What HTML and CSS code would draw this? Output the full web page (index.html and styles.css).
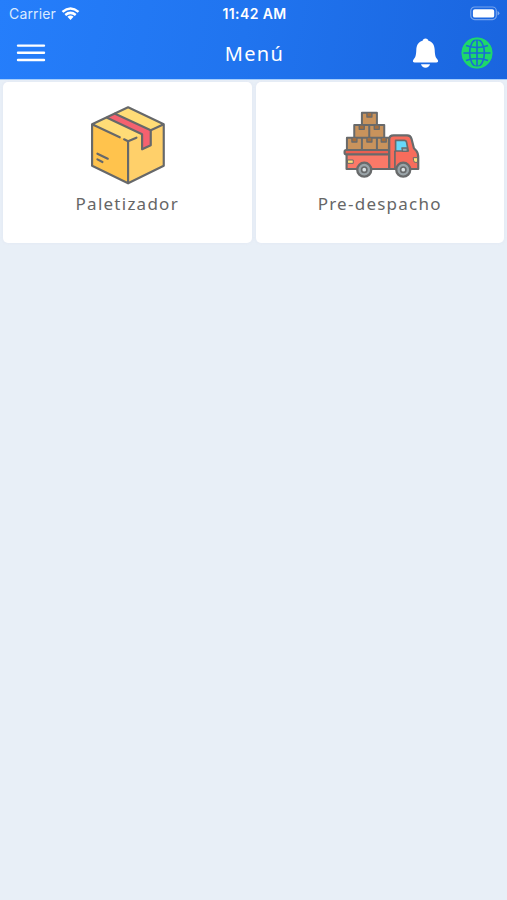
FILE: index.html
```html
<!DOCTYPE html>
<html lang="es">
<head>
<meta charset="utf-8">
<title>Menú</title>
<link rel="stylesheet" href="styles.css">
</head>
<body>
<header class="header">
  <div class="status">
    <div class="carrier"><span class="carrier-name">Carrier</span>
      <svg class="wifi" viewBox="0 0 20 15" fill="none" stroke="#fff" stroke-width="2.7"><path d="M1.4 5.2Q10-2 18.6 5.2M4.4 8.5Q10 4 15.6 8.5"/><path d="M6.7 10.4Q10 7.9 13.3 10.4L10 14Z" fill="#fff" stroke="none"/></svg>
    </div>
    <span class="time">11:42 AM</span>
    <svg class="battery" viewBox="0 0 31 15"><rect x=".8" y=".8" width="26.4" height="13" rx="4" fill="none" stroke="#fff" stroke-opacity=".4" stroke-width="1.2"/><rect x="3" y="3" width="22" height="8.7" rx="2" fill="#fff"/><path d="M28.5 5v4.6Q30.4 8.7 30.4 7.3T28.5 5Z" fill="#fff" fill-opacity=".45"/></svg>
  </div>
  <div class="toolbar">
    <svg class="burger" viewBox="0 0 29 20" stroke="#fff" stroke-width="2.4" stroke-linecap="round"><path d="M1.5 2.6h26M1.5 9.8h26M1.5 17h26"/></svg>
    <h1 class="title">Menú</h1>
    <div class="actions">
      <svg class="bell" viewBox="0 0 27 32" fill="#fff"><path d="M13.5.5C15.2.5 16.2 1.5 16.5 2.8 21 4.2 22.8 7.3 23 12.5 23.2 18.3 24 20.3 26 22.4 27.1 24 26.3 25.2 24.7 25.2H2.3C.7 25.2-.1 24 1 22.4 3 20.3 3.8 18.3 4 12.5 4.2 7.3 6 4.2 10.5 2.8 10.8 1.5 11.8.5 13.5.5Z"/><path d="M8.8 27.2h9.4Q17 30.8 13.5 30.8T8.8 27.2Z"/></svg>
      <svg class="globe" viewBox="0 0 32 32"><circle cx="16" cy="16" r="15.3" fill="#1ed76b"/><g fill="none" stroke="#1a69d8" stroke-width="1.6"><path d="M16 2v28M1 16h30M5 8.5Q16 12.5 27 8.5M5 23.5Q16 19.5 27 23.5"/><ellipse cx="16" cy="16" rx="7.4" ry="13.6"/></g><circle cx="16" cy="16" r="14.5" fill="none" stroke="#1ed76b" stroke-width="1.8"/></svg>
    </div>
  </div>
</header>
<main class="menu">
  <a class="card">
    <svg class="icon" viewBox="-8.25 0 300 288" stroke-linejoin="round" stroke-linecap="round">
      <path d="M37 85 145 34 252 85V209L145 262 37 209Z" fill="#ffd06a"/>
      <path d="M37 85 145 134V262L37 209Z" fill="#ffc34d"/>
      <path d="M37 85 145 34 252 85 145 134Z" fill="#ffdc77"/>
      <path d="M82 65 106 53 213 103V148L187 160V115Z" fill="#f5616f"/>
      <g fill="none" stroke="#66686a" stroke-width="6.5">
        <path d="M120 124 37 85 145 34 252 85V209L145 262 37 209V85M252 85 213 103M145 262V136L133 130M145 136 170 125"/>
        <path d="M82 65 187 115V160L213 148V103L106 53M53 173 84 188M53 190 68 198"/>
      </g>
    </svg>
    <span class="label">Paletizador</span>
  </a>
  <a class="card">
    <svg class="icon" viewBox="-15.75 -12 300 288" stroke-linejoin="round" stroke-linecap="round">
      <g fill="#c9935c" stroke="#686a6b" stroke-width="6">
        <path d="M80 38h45v37H80ZM57 75h45v38H57ZM102 75h45v38h-45ZM35 113h45v37H35ZM80 113h45v37H80ZM125 113h36v37h-36Z"/>
      </g>
      <g fill="#a66e3c" stroke="#686a6b" stroke-width="4">
        <path d="M95 40v11h15V40M72 77v11h15V77M117 77v11h15V77M50 115v11h15V115M95 115v11h15V115M138 115v11h15V115"/>
      </g>
      <g stroke="#686a6b" stroke-width="6.5">
        <path d="M34 162H162V207H34Z" fill="#fa7968"/>
        <rect x="28" y="150" width="134" height="13" rx="5" fill="#e95f51"/>
        <path d="M162 207V119Q162 106 175 106H216Q226 106 229 117L236 145 243 152Q249 159 249 174V207Z" fill="#f76c5c"/>
      </g>
      <path d="M179 154V206" stroke="#686a6b" stroke-width="5"/>
      <path d="M181 121H207Q213 121 214 127L219 153H181Z" fill="#67d7fa" stroke="#686a6b" stroke-width="5"/>
      <path d="M200 144h16v10h-14Z" fill="#9ba7ad" stroke="#686a6b" stroke-width="4"/>
      <path d="M38 180H54V190H38ZM235 173H247V187H240Q235 187 235 182Z" fill="#ffe17a" stroke="#686a6b" stroke-width="3"/>
      <g fill="#9aa4a8" stroke="#686a6b" stroke-width="7"><circle cx="87" cy="209" r="21"/><circle cx="204" cy="209" r="21"/></g>
      <g fill="#dce2e4" stroke="#686a6b" stroke-width="5"><circle cx="87" cy="209" r="8"/><circle cx="204" cy="209" r="8"/></g>
    </svg>
    <span class="label">Pre-despacho</span>
  </a>
</main>
</body>
</html>
```
FILE: styles.css
```css
* { box-sizing: border-box; }
body {
  margin: 0;
  min-height: 900px;
  background: #e8eff7;
  font-family: "Noto Sans", "Open Sans", sans-serif;
}
.header {
  height: 80px;
  color: #fff;
  background: linear-gradient(100deg, #257efb 0%, #2074ef 48%, #1a65df 100%);
  border-bottom: 1px solid #a4cdfc;
}
.status {
  height: 27px;
  padding: 0 7px 0 9px;
  display: grid;
  grid-template-columns: 1fr auto 1fr;
  align-items: center;
  font: 14px/27px Inter, sans-serif;
}
.carrier { display: flex; align-items: center; gap: 5px; color: #d9eaff; }
.carrier-name { letter-spacing: .15px; }
.wifi { width: 19px; height: 14px; }
.time { font-size: 14px; font-weight: 600; letter-spacing: .4px; line-height: 27px; }
.battery { width: 30px; height: 15px; justify-self: end; }
.toolbar {
  height: 52px;
  padding: 0 14px 0 16px;
  display: grid;
  grid-template-columns: 1fr auto 1fr;
  align-items: center;
}
.burger { width: 30px; height: 20px; }
.title { margin: 0; padding-top: 2px; font-size: 20px; line-height: 50px; font-weight: 400; letter-spacing: 1.4px; }
.actions { justify-self: end; display: flex; align-items: center; gap: 22px; }
.bell { width: 27px; height: 31px; }
.globe { width: 32px; height: 32px; }
.menu {
  display: grid;
  grid-template-columns: 1fr 1fr;
  gap: 4px;
  padding: 2px 3px;
}
.card {
  height: 161px;
  padding-top: 14px;
  display: flex;
  flex-direction: column;
  align-items: center;
  background: #fff;
  border-radius: 5px;
  box-shadow: 0 0 3px rgba(225, 229, 243, .8);
}
.icon { width: 100px; height: 96px; }
.label { font-size: 17px; line-height: 24px; letter-spacing: 1.25px; color: #666; }
```
